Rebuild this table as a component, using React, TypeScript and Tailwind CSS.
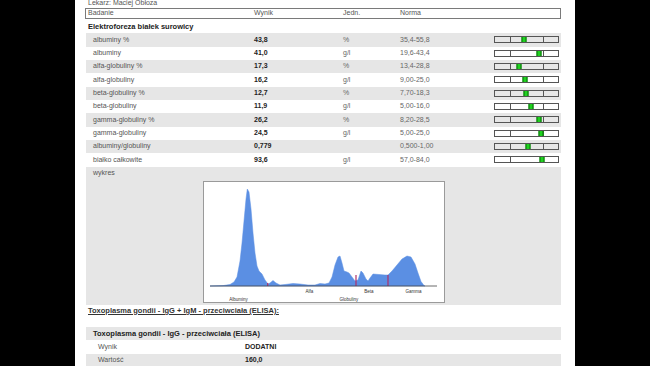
import React from "react";

type Row = { name: string; value: string; unit: string; lo: number; hi: number; norm: string };

const rows: Row[] = [
  { name: "albuminy %", value: "43,8", unit: "%", lo: 35.4, hi: 55.8, norm: "35,4-55,8" },
  { name: "albuminy", value: "41,0", unit: "g/l", lo: 19.6, hi: 43.4, norm: "19,6-43,4" },
  { name: "alfa-globuliny %", value: "17,3", unit: "%", lo: 13.4, hi: 28.8, norm: "13,4-28,8" },
  { name: "alfa-globuliny", value: "16,2", unit: "g/l", lo: 9, hi: 25, norm: "9,00-25,0" },
  { name: "beta-globuliny %", value: "12,7", unit: "%", lo: 7.7, hi: 18.3, norm: "7,70-18,3" },
  { name: "beta-globuliny", value: "11,9", unit: "g/l", lo: 5, hi: 16, norm: "5,00-16,0" },
  { name: "gamma-globuliny %", value: "26,2", unit: "%", lo: 8.2, hi: 28.5, norm: "8,20-28,5" },
  { name: "gamma-globuliny", value: "24,5", unit: "g/l", lo: 5, hi: 25, norm: "5,00-25,0" },
  { name: "albuminy/globuliny", value: "0,779", unit: "", lo: 0.5, hi: 1, norm: "0,500-1,00" },
  { name: "białko całkowite", value: "93,6", unit: "g/l", lo: 57, hi: 84, norm: "57,0-84,0" },
];

function num(s: string) {
  return parseFloat(s.replace(",", "."));
}

// marker sits in the middle half of the bar when the value is inside the norm
function NormBar({ r }: { r: Row }) {
  const t = Math.min(1, Math.max(0, (num(r.value) - r.lo) / (r.hi - r.lo)));
  const pos = 0.25 + t * 0.5;
  return (
    <div className="relative h-[7px] w-[65px] border border-[#555]">
      <div className="absolute top-0 bottom-0 left-[15px] w-px bg-[#555]" />
      <div className="absolute top-0 bottom-0 left-[48px] w-px bg-[#555]" />
      <div
        className="absolute top-0 bottom-0 w-[5px] -translate-x-1/2 border-x border-[#0b6b0b] bg-[#1fd21f]"
        style={{ left: `${pos * 63}px` }}
      />
    </div>
  );
}

const curve =
  "7,105 20,104.6 27,103.5 31,101 34,96 37,80 39,62 41,40 43,18 44.3,8 46,11 48,28 50,52 52,72 54,85 56,90 59,93 62,99 65,103 67,102 70,99.5 73,102 77,104 82,103.5 90,102.5 97,103 105,104 112,104 117,102.5 122,103 126,102 129,96 132,84 135,76 137,75 139,82 141,90 144,91 146,92 149,96 152,100 155,99 157,93 158,90 160,92 163,98 165,100 167,97 170,93 176,93.5 182,94 185,94 189,90 194,84 199,78 204,75 208,76 212,83 215,92 218,100.5 221,104.5 222,105";

function Chart() {
  return (
    <div className="mx-auto h-[122px] w-[242px] border border-[#9a9a9a] bg-white">
      <svg width="240" height="120" viewBox="1 1 240 120">
        <polygon points={curve} fill="#5b8fe3" stroke="#5b8fe3" strokeWidth="0.5" strokeLinejoin="round" />
        <line x1="64.7" y1="102" x2="64.7" y2="105" stroke="#b0306a" strokeWidth="1.2" />
        <line x1="153" y1="94" x2="153" y2="105" stroke="#b0306a" strokeWidth="1.2" />
        <line x1="185" y1="94" x2="185" y2="105" stroke="#b0306a" strokeWidth="1.2" />
        <line x1="7" y1="105" x2="234" y2="105" stroke="#444" strokeWidth="0.8" />
        <g fontFamily="Liberation Sans, Arial, sans-serif" fontSize="4.5" fill="#333" textAnchor="middle">
          <text x="35.5" y="119.5">Albuminy</text>
          <text x="106.5" y="112">Alfa</text>
          <text x="146" y="119.5">Globuliny</text>
          <text x="166" y="112">Beta</text>
          <text x="210.5" y="112">Gamma</text>
        </g>
      </svg>
    </div>
  );
}

export default function App() {
  return (
    <div className="flex h-[366px] w-full justify-center overflow-hidden bg-black font-['Liberation_Sans',Arial,sans-serif]">
      <div className="h-[366px] w-[500px] overflow-hidden bg-white pl-[10px] pr-[14px]">
        <div className="-mt-[2px] flex h-[10px] items-center pl-[3px] text-[7px] text-[#555]">Lekarz: Maciej Obłoza</div>
        <div className="flex h-[11px] items-center border border-[#7a7a7a] text-[7px] text-[#555]">
          <div className="w-[168px] pl-[2px]">Badanie</div>
          <div className="w-[89px]">Wynik</div>
          <div className="w-[57px]">Jedn.</div>
          <div>Norma</div>
        </div>
        <div className="flex h-[14.3px] items-center pl-[3px] text-[7.5px] font-bold text-[#222]">
          Elektroforeza białek surowicy
        </div>
        <div className="ml-px">
          {rows.map((r, i) => (
            <div
              key={r.name}
              className={`flex h-[13.33px] items-center text-[7px] ${i % 2 === 0 ? "bg-[#e6e6e6]" : "bg-white"}`}
            >
              <div className="w-[168px] pl-[7px] text-[#555]">{r.name}</div>
              <div className="w-[89px] font-bold text-[#222]">{r.value}</div>
              <div className="w-[57px] text-[#666]">{r.unit}</div>
              <div className="w-[94px] text-[#666]">{r.norm}</div>
              <NormBar r={r} />
            </div>
          ))}
          <div className="h-[138.3px] bg-[#e6e6e6]">
            <div className="flex h-[14px] items-center pl-[7px] text-[7px] text-[#555]">wykres</div>
            <Chart />
          </div>
          <div className="h-[22px] pl-[2px] pt-[1px] text-[7.5px] font-bold leading-[10px] text-[#333] underline">
            Toxoplasma gondii - IgG + IgM - przeciwciała (ELISA):
          </div>
          <div className="flex h-[13.33px] items-center bg-[#e6e6e6] pl-[7px] text-[7.5px] font-bold text-[#222]">
            Toxoplasma gondii - IgG - przeciwciała (ELISA)
          </div>
          <div className="flex h-[13.33px] items-center text-[7px]">
            <div className="w-[159px] pl-[12px] text-[#555]">Wynik</div>
            <div className="font-bold text-[#222]">DODATNI</div>
          </div>
          <div className="flex h-[13.33px] items-center bg-[#e6e6e6] text-[7px]">
            <div className="w-[159px] pl-[12px] text-[#555]">Wartość</div>
            <div className="font-bold text-[#222]">160,0</div>
          </div>
        </div>
      </div>
    </div>
  );
}
